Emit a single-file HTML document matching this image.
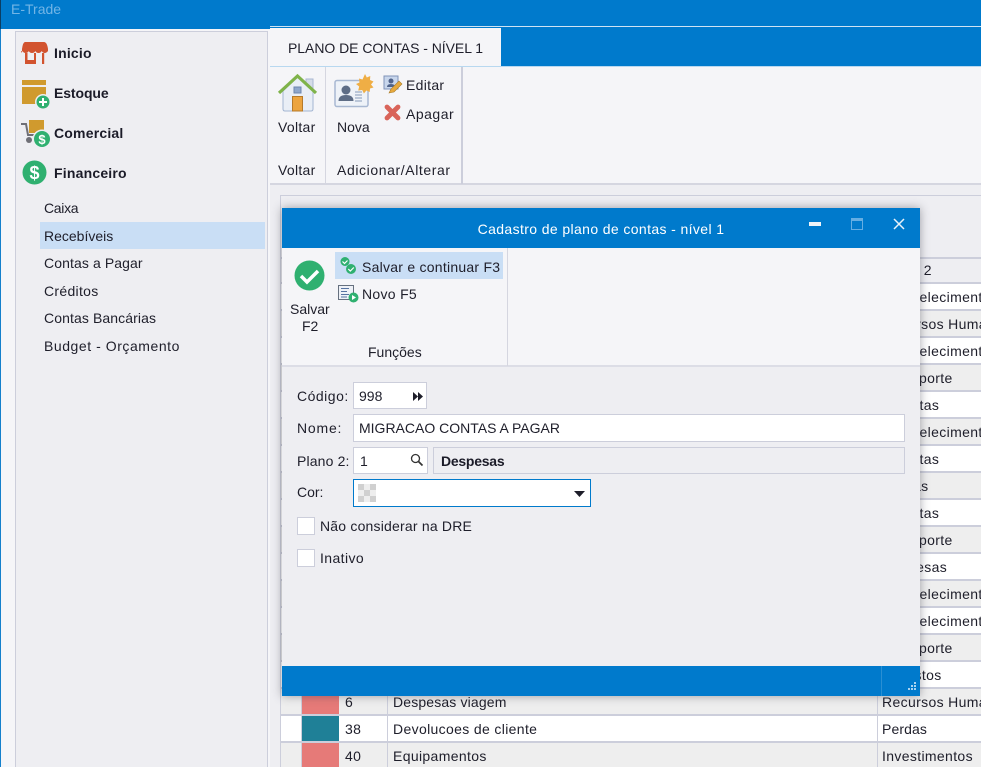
<!DOCTYPE html>
<html><head><meta charset="utf-8"><style>
html,body{margin:0;padding:0;width:981px;height:767px;overflow:hidden;background:#f5f5f8}
body{position:relative;font:14px "Liberation Sans",sans-serif;color:#1e1e2a}
div,svg,span{position:absolute;box-sizing:border-box}
.t{white-space:nowrap;line-height:18px}
.b{font-weight:bold;color:#1b1b28}
.r{left:0;width:700px;height:25px}
.w{background:#fff}
.g{background:#eee}
.l{left:0;width:700px;height:2px;background:#cccedb}
.c{left:601px;height:25px;line-height:25px;white-space:nowrap;font-size:14px;letter-spacing:.35px}
.v{width:1px;top:432px;height:78px;background:#cccedb}
</style></head><body>
<div style="left:0;top:0;width:981px;height:29px;background:#007acc"></div>
<div style="left:0;top:0;width:1px;height:29px;background:#0b3e63"></div>
<div style="left:0;top:29px;width:1px;height:738px;background:#1480cc"></div>
<div class="t" style="left:11px;top:0;color:#72b5e6;font-size:14px;line-height:19px">E-Trade</div>
<div style="left:270px;top:27px;width:711px;height:40px;background:#007acc"></div>
<div style="left:270px;top:26px;width:711px;height:1px;background:#cfe3f3"></div>
<div style="left:15px;top:31px;width:253px;height:736px;background:#eeeef2;border:1px solid #cccedb;border-bottom:0"></div>

<svg style="left:21px;top:41px" width="28" height="25" viewBox="0 0 28 25"><path d="M4 1h19q3 0 4 7v2q-1.500 2-3.300 2t-3-2q-1 2-3.200 2t-3.200-2q-1 2-3.300 2t-3.200-2q-1 2-3.200 2t-3-2q-1 2-2.800 2T1 10V8q1-7 3-7z" fill="#d2532f"/><path d="M4 12h2.500v7h6.500v-7H15v11H4z" fill="#d2532f"/><rect x="21" y="12" width="2.200" height="11" fill="#d2532f"/></svg>
<div class="t b" style="left:54px;top:44px;letter-spacing:.2px">Inicio</div>
<svg style="left:21px;top:79px" width="30" height="30" viewBox="0 0 30 30"><rect x="1" y="1" width="24" height="5" fill="#d09a2e"/><rect x="1" y="8" width="24" height="17" fill="#d09a2e"/><circle cx="22" cy="23" r="8" fill="#eeeef2"/><circle cx="22" cy="23" r="6.500" fill="#2fb070"/><path d="M22 19v8M18 23h8" stroke="#fff" stroke-width="2"/></svg>
<div class="t b" style="left:54px;top:84px;letter-spacing:-.1px">Estoque</div>
<svg style="left:20px;top:119px" width="32" height="30" viewBox="0 0 32 30"><rect x="9" y="1" width="15" height="13" fill="#d09a2e"/><path d="M1 5h5l2 11h8" stroke="#6f6f76" stroke-width="2" fill="none"/><circle cx="9" cy="21" r="3" fill="#6f6f76"/><circle cx="22" cy="20" r="9.500" fill="#eeeef2"/><circle cx="22" cy="20" r="8" fill="#2fb070"/><text x="22" y="25" font-size="13" font-weight="bold" text-anchor="middle" fill="#fff" font-family="Liberation Sans">$</text></svg>
<div class="t b" style="left:54px;top:124px;letter-spacing:.2px">Comercial</div>
<svg style="left:22px;top:160px" width="25" height="25" viewBox="0 0 25 25"><circle cx="12.500" cy="12.500" r="12" fill="#2fb070"/><text x="12.500" y="19" font-size="18" font-weight="bold" text-anchor="middle" fill="#fff" font-family="Liberation Sans">$</text></svg>
<div class="t b" style="left:54px;top:164px;letter-spacing:.2px">Financeiro</div>

<div style="left:40px;top:222px;width:225px;height:27px;background:#c9def5"></div>
<div class="t" style="left:44px;top:199px;letter-spacing:-.3px">Caixa</div>
<div class="t" style="left:44px;top:227px">Recebíveis</div>
<div class="t" style="left:44px;top:254px;letter-spacing:.1px">Contas a Pagar</div>
<div class="t" style="left:44px;top:282px;letter-spacing:.3px">Créditos</div>
<div class="t" style="left:44px;top:309px;letter-spacing:.1px">Contas Bancárias</div>
<div class="t" style="left:44px;top:337px;letter-spacing:.55px">Budget - Orçamento</div>

<div style="left:270px;top:28px;width:231px;height:39px;background:#f5f5f8"></div>
<div class="t" style="left:288px;top:39px;letter-spacing:-.04px">PLANO DE CONTAS - NÍVEL 1</div>
<div style="left:270px;top:66px;width:711px;height:1px;background:#b8d8f0"></div>
<div style="left:270px;top:67px;width:711px;height:118px;background:#f5f5f8;border-bottom:2px solid #d5d6e0"></div>
<div style="left:325px;top:67px;width:1px;height:117px;background:#d5d6e0"></div>
<div style="left:461px;top:67px;width:2px;height:117px;background:#cccedb"></div>
<div style="left:270px;top:185px;width:711px;height:582px;background:#eeeef2"></div>

<svg style="left:278px;top:73px" width="40" height="40" viewBox="0 0 40 40"><rect x="28" y="6" width="7" height="12" fill="#d5dce8" stroke="#a9b8d2"/><path d="M5 18L19.500 4 35 18v18q0 2-2 2H7q-2 0-2-2z" fill="#e9eef6" stroke="#a3b5d2"/><path d="M1 20L19.500 3 38 20" fill="none" stroke="#7fb34a" stroke-width="3.200"/><rect x="16" y="14" width="7" height="6" fill="#8ea6cc" stroke="#6d86ad"/><rect x="14.500" y="23.500" width="10" height="14.500" fill="#eca43f" stroke="#b67a2a"/></svg>
<div class="t" style="left:278px;top:118px;letter-spacing:.3px">Voltar</div>
<div class="t" style="left:278px;top:161px;letter-spacing:.3px">Voltar</div>

<svg style="left:334px;top:74px" width="40" height="36" viewBox="0 0 40 36"><rect x="1" y="6.500" width="33" height="26" rx="2" fill="#eef2f8" stroke="#a8b8d2" stroke-width="1.500"/><circle cx="12" cy="16" r="4.500" fill="#5e6d86"/><path d="M4.500 27q0-6 7.500-6t7.500 6z" fill="#5e6d86"/><path d="M21 18h7M21 21h7M21 24h7M21 27h7" stroke="#a9b8ce" stroke-width="1.500"/><path d="M31 0l1.800 3.500 3.500-1.500-.3 4 3.500 1.500-2.500 3 2.500 3-3.500 1-.3 3.500-3.300-1.500-2.500 3-1.700-3.500-4 .5 1-4-3.200-2.500 3.500-1.500-.5-4 3.500 1z" fill="#efae45"/></svg>
<div class="t" style="left:337px;top:118px">Nova</div>
<svg style="left:383px;top:75px" width="20" height="20" viewBox="0 0 20 20"><rect x="1" y="1" width="14" height="13" fill="#c8d6ec" stroke="#7f93b8"/><circle cx="8" cy="6" r="2.500" fill="#50638a"/><path d="M4 12q0-3 4-3t4 3z" fill="#50638a"/><path d="M6 18l2-4 8-8 3 3-8 8z" fill="#e6a83d" stroke="#a97c28" stroke-width=".6"/></svg>
<div class="t" style="left:406px;top:76px;letter-spacing:.3px">Editar</div>
<svg style="left:384px;top:104px" width="17" height="17" viewBox="0 0 17 17"><path d="M3 3L14 14M14 3L3 14" stroke="#d9645a" stroke-width="4.800" stroke-linecap="round"/></svg>
<div class="t" style="left:406px;top:105px;letter-spacing:.5px">Apagar</div>
<div class="t" style="left:337px;top:161px;letter-spacing:.6px">Adicionar/Alterar</div>

<div style="left:280px;top:195px;width:701px;height:572px;border-left:1px solid #cccedb;border-top:1px solid #cccedb;background:#eeeef2"></div>
<div style="left:281px;top:257px;width:700px;height:510px;overflow:hidden">
<div style="left:0;top:0;width:700px;height:2px;background:#cccedb"></div>
<div class="c" style="top:1px">Plano 2</div>
<div class="r w" style="top:27px"></div><div class="c" style="top:28px">Estabelecimento</div>
<div class="r g" style="top:54px"></div><div class="c" style="top:55px">Recursos Humanos</div>
<div class="r w" style="top:81px"></div><div class="c" style="top:82px">Estabelecimento</div>
<div class="r g" style="top:108px"></div><div class="c" style="top:109px">Transporte</div>
<div class="r w" style="top:135px"></div><div class="c" style="top:136px">Receitas</div>
<div class="r g" style="top:162px"></div><div class="c" style="top:163px">Estabelecimento</div>
<div class="r w" style="top:189px"></div><div class="c" style="top:190px">Receitas</div>
<div class="r g" style="top:216px"></div><div class="c" style="top:217px">Perdas</div>
<div class="r w" style="top:243px"></div><div class="c" style="top:244px">Receitas</div>
<div class="r g" style="top:270px"></div><div class="c" style="top:271px">Transporte</div>
<div class="r w" style="top:297px"></div><div class="c" style="top:298px">Despesas</div>
<div class="r g" style="top:324px"></div><div class="c" style="top:325px">Estabelecimento</div>
<div class="r w" style="top:351px"></div><div class="c" style="top:352px">Estabelecimento</div>
<div class="r g" style="top:378px"></div><div class="c" style="top:379px">Transporte</div>
<div class="r w" style="top:405px"></div><div class="c" style="top:406px">Impostos</div>
<div class="r g" style="top:432px"></div>
<div class="r w" style="top:459px"></div>
<div class="r g" style="top:486px"></div>
<div class="l" style="top:25px"></div><div class="l" style="top:52px"></div><div class="l" style="top:79px"></div><div class="l" style="top:106px"></div><div class="l" style="top:133px"></div><div class="l" style="top:160px"></div><div class="l" style="top:187px"></div><div class="l" style="top:214px"></div><div class="l" style="top:241px"></div><div class="l" style="top:268px"></div><div class="l" style="top:295px"></div><div class="l" style="top:322px"></div><div class="l" style="top:349px"></div><div class="l" style="top:376px"></div><div class="l" style="top:403px"></div><div class="l" style="top:430px"></div>
<div class="l" style="top:457px"></div><div class="l" style="top:484px"></div>
<div style="left:21px;top:432px;width:37px;height:25px;background:#e67a78"></div>
<div style="left:21px;top:459px;width:37px;height:25px;background:#1f8097"></div>
<div style="left:21px;top:486px;width:37px;height:24px;background:#e67a78"></div>
<div class="c" style="left:64px;top:433px">6</div><div class="c" style="left:112px;top:433px;letter-spacing:.15px">Despesas viagem</div><div class="c" style="top:433px;width:99px;overflow:hidden">Recursos Humanos</div>
<div class="c" style="left:64px;top:460px">38</div><div class="c" style="left:112px;top:460px">Devolucoes de cliente</div><div class="c" style="top:460px;letter-spacing:.1px">Perdas</div>
<div class="c" style="left:64px;top:487px">40</div><div class="c" style="left:112px;top:487px">Equipamentos</div><div class="c" style="top:487px">Investimentos</div>
<div class="v" style="left:106px"></div>
<div class="v" style="left:596px"></div>
<div class="v" style="left:20px"></div>
</div>

<div style="left:282px;top:208px;width:638px;height:488px;background:#eeeef2;box-shadow:0 0 9px rgba(60,60,70,.45)"></div>
<div style="left:282px;top:208px;width:638px;height:40px;background:#007acc"></div>
<div class="t" style="left:282px;top:220px;width:638px;text-align:center;color:#fff;letter-spacing:.38px">Cadastro de plano de contas - nível 1</div>
<div style="left:809px;top:222px;width:12px;height:4px;background:#f0f4f8"></div>
<div style="left:851px;top:218px;width:12px;height:12px;border:1px solid #65aee3;border-top:3px solid #65aee3"></div>
<svg style="left:893px;top:218px" width="12" height="12" viewBox="0 0 12 12"><path d="M1 1l10 10M11 1L1 11" stroke="#e9f2fa" stroke-width="1.500"/></svg>
<div style="left:282px;top:248px;width:638px;height:119px;background:#f5f5f8;border-bottom:2px solid #dcdde6"></div>
<div style="left:507px;top:248px;width:1px;height:118px;background:#d5d6e0"></div>
<svg style="left:294px;top:260px" width="31" height="31" viewBox="0 0 31 31"><circle cx="15.500" cy="15.500" r="15" fill="#2fb070"/><path d="M7 16l6 6 11-11" fill="none" stroke="#fff" stroke-width="3.500"/></svg>
<div class="t" style="left:290px;top:300px">Salvar</div>
<div class="t" style="left:302px;top:317px">F2</div>
<div style="left:335px;top:252px;width:168px;height:27px;background:#c9def5"></div>
<svg style="left:340px;top:256px" width="17" height="20" viewBox="0 0 17 20"><circle cx="5" cy="5.500" r="4.500" fill="#2fb070"/><path d="M2.500 5.500l2 2 3-3" fill="none" stroke="#fff" stroke-width="1.200"/><circle cx="11" cy="13" r="5" fill="#2fb070"/><path d="M8.300 13l2 2 3.500-3.500" fill="none" stroke="#fff" stroke-width="1.200"/></svg>
<div class="t" style="left:362px;top:258px;letter-spacing:.25px">Salvar e continuar F3</div>
<svg style="left:338px;top:285px" width="21" height="18" viewBox="0 0 21 18"><rect x=".5" y=".5" width="15" height="14" fill="#eef1f7" stroke="#66707f"/><path d="M3 3.500h8M3 6.500h6M3 9.500h8M3 12h6" stroke="#5672a0" stroke-width="1"/><circle cx="15.500" cy="12.500" r="5" fill="#2fb070"/><path d="M14 10l4 2.500-4 2.500z" fill="#fff"/></svg>
<div class="t" style="left:362px;top:285px;letter-spacing:.3px">Novo F5</div>
<div class="t" style="left:368px;top:343px">Funções</div>

<div class="t" style="left:297px;top:387px;letter-spacing:.5px">Código:</div>
<div style="left:353px;top:382px;width:74px;height:27px;background:#fff;border:1px solid #cccedb"></div>
<div class="t" style="left:359px;top:387px">998</div>
<svg style="left:412px;top:392px" width="12" height="9" viewBox="0 0 12 9"><path d="M1 0l5 4.500L1 9zM6 0l5 4.500L6 9z" fill="#1e1e2a"/></svg>
<div class="t" style="left:297px;top:419px;letter-spacing:.8px">Nome:</div>
<div style="left:353px;top:414px;width:552px;height:28px;background:#fff;border:1px solid #cccedb"></div>
<div class="t" style="left:359px;top:419px">MIGRACAO CONTAS A PAGAR</div>
<div class="t" style="left:297px;top:452px;letter-spacing:.15px">Plano 2:</div>
<div style="left:353px;top:447px;width:75px;height:27px;background:#fff;border:1px solid #cccedb"></div>
<div class="t" style="left:360px;top:452px">1</div>
<svg style="left:410px;top:453px" width="14" height="14" viewBox="0 0 14 14"><circle cx="5.500" cy="5.500" r="4" fill="none" stroke="#333" stroke-width="1.300"/><path d="M8.500 8.500l4 4" stroke="#333" stroke-width="1.700"/></svg>
<div style="left:433px;top:447px;width:472px;height:27px;background:#eeeef2;border:1px solid #cccedb"></div>
<div class="t b" style="left:441px;top:452px;letter-spacing:-.25px">Despesas</div>
<div class="t" style="left:297px;top:483px">Cor:</div>
<div style="left:353px;top:479px;width:238px;height:28px;background:#fff;border:1px solid #007acc"></div>
<svg style="left:358px;top:484px" width="18" height="18" viewBox="0 0 18 18"><rect width="18" height="18" fill="#eee"/><path d="M0 0h6v6H0zM12 0h6v6h-6zM6 6h6v6H6zM0 12h6v6H0zM12 12h6v6h-6z" fill="#d0d0d0"/></svg>
<svg style="left:574px;top:491px" width="11" height="7" viewBox="0 0 11 7"><path d="M0 0h11L5.500 6z" fill="#1e1e2a"/></svg>
<div style="left:297px;top:517px;width:18px;height:18px;background:#fff;border:1px solid #cccedb"></div>
<div class="t" style="left:320px;top:517px;letter-spacing:.2px">Não considerar na DRE</div>
<div style="left:297px;top:549px;width:18px;height:18px;background:#fff;border:1px solid #cccedb"></div>
<div class="t" style="left:320px;top:549px;letter-spacing:.4px">Inativo</div>

<div style="left:282px;top:666px;width:638px;height:30px;background:#007acc"></div>
<div style="left:881px;top:666px;width:1px;height:30px;background:#2a8fd3"></div>
<svg style="left:907px;top:682px" width="10" height="10" viewBox="0 0 10 10"><path d="M7 0h2v2H7zM7 3h2v2H7zM4 3h2v2H4zM7 6h2v2H7zM4 6h2v2H4zM1 6h2v2H1z" fill="#a9d3f0"/></svg>
</body></html>
